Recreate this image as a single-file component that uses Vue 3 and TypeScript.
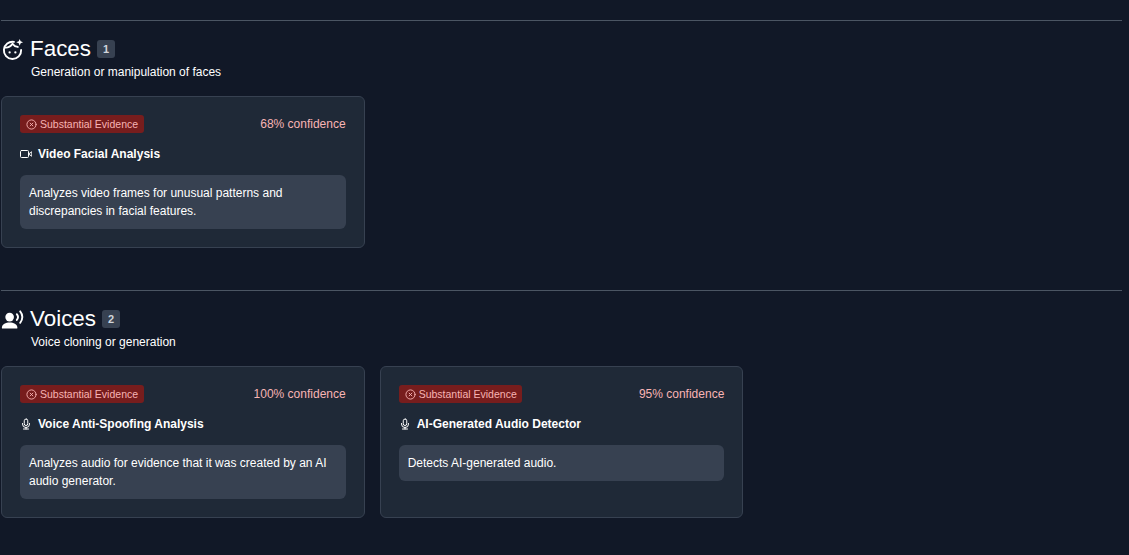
<script setup lang="ts">
interface Item { id: string; conf: number; icon: 'video' | 'mic'; name: string; desc: string }
interface Section { id: string; title: string; sub: string; icon: 'face' | 'voice'; items: Item[] }
const sections: Section[] = [
  { id: 'f', title: 'Faces', sub: 'Generation or manipulation of faces', icon: 'face', items: [
    { id: 'v', conf: 68, icon: 'video', name: 'Video Facial Analysis', desc: 'Analyzes video frames for unusual patterns and discrepancies in facial features.' },
  ] },
  { id: 'v', title: 'Voices', sub: 'Voice cloning or generation', icon: 'voice', items: [
    { id: 'a', conf: 100, icon: 'mic', name: 'Voice Anti-Spoofing Analysis', desc: 'Analyzes audio for evidence that it was created by an AI audio generator.' },
    { id: 'b', conf: 95, icon: 'mic', name: 'AI-Generated Audio Detector', desc: 'Detects AI-generated audio.' },
  ] },
]
</script>

<template>
  <main class="page">
    <section v-for="s in sections" :key="s.id" class="section">
      <div class="head">
        <svg v-if="s.icon === 'face'" class="sec-icon" viewBox="0 0 24 24" fill="none" stroke="#fff" stroke-width="2" stroke-linecap="round" stroke-linejoin="round">
          <path d="M13.500 4.100A9 9 0 1 0 21 12.500" />
          <path d="M4 10c3 .3 6-1 8-4 1.200 1.800 3 3 5.500 3.300" />
          <circle cx="9" cy="15" r="1.200" fill="#fff" stroke="none" />
          <circle cx="15" cy="15" r="1.200" fill="#fff" stroke="none" />
          <path d="M19.500 1l1 2.500L23 4.500l-2.500 1-1 2.500-1-2.500L16 4.500l2.500-1z" fill="#fff" stroke="none" />
        </svg>
        <svg v-else class="sec-icon" viewBox="0 0 24 24" fill="#fff">
          <circle cx="9" cy="9.500" r="4.500" />
          <path d="M1 20c0-3.200 4-5 8-5s8 1.800 8 5v1.500H1z" />
          <path d="M16.500 6.500c1.500 1.800 1.500 4.200 0 6M20 3.500c3 3.500 3 8.500 0 12" fill="none" stroke="#fff" stroke-width="2" stroke-linecap="round" />
        </svg>
        <h2 class="title">{{ s.title }}</h2>
        <span class="count">{{ s.items.length }}</span>
      </div>
      <p class="sub">{{ s.sub }}</p>
      <div class="grid">
        <article v-for="it in s.items" :key="it.id" class="card">
          <div class="row">
            <span class="badge">
              <svg class="badge-icon" viewBox="0 0 24 24" fill="none" stroke="currentColor" stroke-width="2" stroke-linecap="round">
                <circle cx="12" cy="12" r="10" /><path d="M15 9l-6 6M9 9l6 6" />
              </svg>
              Substantial Evidence
            </span>
            <span class="conf">{{ it.conf }}% confidence</span>
          </div>
          <div class="name">
            <svg v-if="it.icon === 'video'" class="name-icon" viewBox="0 0 24 24" fill="none" stroke="#fff" stroke-width="2" stroke-linecap="round" stroke-linejoin="round">
              <rect x="1" y="5" width="16" height="14" rx="2" /><path d="M23 8l-6 4 6 4z" />
            </svg>
            <svg v-else class="name-icon" viewBox="0 0 24 24" fill="none" stroke="#fff" stroke-width="2" stroke-linecap="round" stroke-linejoin="round">
              <rect x="8.500" y="2" width="7" height="13" rx="3.500" /><path d="M19 11v1a7 7 0 0 1-14 0v-1M12 19v3M7 22h10" />
            </svg>
            {{ it.name }}
          </div>
          <div class="desc">{{ it.desc }}</div>
        </article>
      </div>
    </section>
  </main>
</template>

<style>
html, body { background: #111827; }
</style>

<style scoped>
.page {
  width: 1121px;
  margin-left: 1px;
  padding-top: 20px;
  font-family: "Liberation Sans", Arial, sans-serif;
  color: #fff;
}
.section {
  box-sizing: border-box;
  border-top: 1px solid #4b5563;
  padding-top: 16px;
  height: 270px;
}
.head { display: flex; align-items: center; height: 24px; }
.sec-icon { width: 23px; height: 23px; margin-right: 6px; flex: none; }
.title { margin: 0; font-size: 22.4px; font-weight: 400; line-height: 24px; }
.count {
  margin-left: 6px;
  width: 18px;
  height: 18px;
  border-radius: 3px;
  background: #374151;
  color: #d1d5db;
  font-size: 11px;
  font-weight: 700;
  display: flex;
  align-items: center;
  justify-content: center;
}
.sub { margin: 3px 0 0 30px; font-size: 12px; line-height: 16px; }
.grid { display: grid; grid-template-columns: repeat(3, 1fr); gap: 15px; margin-top: 16px; }
.card {
  box-sizing: border-box;
  height: 152px;
  background: #1f2937;
  border: 1px solid #374151;
  border-radius: 6px;
  padding: 18px 18px 0;
}
.row { display: flex; align-items: center; justify-content: space-between; }
.badge {
  display: inline-flex;
  align-items: center;
  gap: 3px;
  height: 18px;
  padding: 0 5.6px 0 6px;
  border-radius: 3px;
  background: #771d1d;
  color: #f8b4b4;
  font-size: 10.5px;
}
.badge-icon { width: 11px; height: 11px; }
.conf { color: #f8b4b4; font-size: 12px; }
.name {
  display: flex;
  align-items: center;
  gap: 6px;
  margin-top: 13px;
  font-size: 12px;
  font-weight: 700;
  line-height: 16px;
}
.name-icon { width: 12px; height: 12px; }
.desc {
  margin-top: 13px;
  background: #374151;
  border-radius: 6px;
  padding: 9px;
  font-size: 12px;
  line-height: 18px;
}
</style>
